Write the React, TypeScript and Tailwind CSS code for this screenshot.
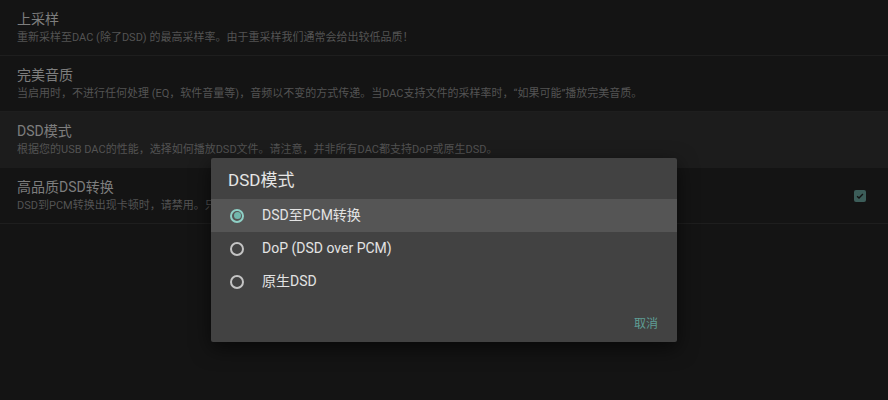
const font = { fontFamily: 'Roboto, "Noto Sans CJK SC", sans-serif' };

type Row = { title: string; sub: string; active?: boolean; check?: boolean };

const rows: Row[] = [
  { title: "上采样", sub: "重新采样至DAC (除了DSD) 的最高采样率。由于重采样我们通常会给出较低品质！" },
  {
    title: "完美音质",
    sub: "当启用时，不进行任何处理 (EQ，软件音量等)，音频以不变的方式传递。当DAC支持文件的采样率时，“如果可能”播放完美音质。",
  },
  {
    title: "DSD模式",
    sub: "根据您的USB DAC的性能，选择如何播放DSD文件。请注意，并非所有DAC都支持DoP或原生DSD。",
    active: true,
  },
  { title: "高品质DSD转换", sub: "DSD到PCM转换出现卡顿时，请禁用。只有在高端设备上才建议使用。", check: true },
];

const options = ["DSD至PCM转换", "DoP (DSD over PCM)", "原生DSD"];

function Radio({ on }: { on: boolean }) {
  return on ? (
    <span className="flex h-[14px] w-[14px] items-center justify-center rounded-full border-2 border-[#8fd0c6]">
      <span className="h-[7px] w-[7px] rounded-full bg-[#72b8ad]" />
    </span>
  ) : (
    <span className="h-[14px] w-[14px] rounded-full border-2 border-[#c4c4c4]" />
  );
}

export default function App() {
  return (
    <div className="relative h-[400px] w-[888px] overflow-hidden bg-[#141414]" style={font}>
      {rows.map((r, i) => (
        <div
          key={i}
          className={`flex h-[56px] items-center border-b px-[17px] ${
            r.active ? "border-transparent bg-[#1c1c1c]" : "border-[#1e1e1e]"
          }`}
        >
          <div className="flex min-w-0 flex-1 flex-col gap-[2px]">
            <div className="text-[14px] leading-[17px] text-[#7e7e7e]">{r.title}</div>
            <div className="truncate text-[11px] leading-[15px] text-[#535353]">{r.sub}</div>
          </div>
          {r.check && (
            <span className="mr-[5px] flex h-[12px] w-[12px] items-center justify-center rounded-[2px] bg-[#3c5d59]">
              <svg viewBox="0 0 12 12" className="h-[10px] w-[10px]">
                <path d="M2.5 6.2l2.3 2.2 4.7-4.8" fill="none" stroke="#121212" strokeWidth="1.6" />
              </svg>
            </span>
          )}
        </div>
      ))}

      <div className="absolute left-[211px] top-[158px] w-[466px] rounded-[2px] bg-[#424242] pb-[8px] shadow-[0_6px_20px_rgba(0,0,0,0.6)]">
        <div className="px-[17px] pb-[10px] pt-[13px] text-[17px] leading-[18px] text-[#e6e6e6]">DSD模式</div>
        {options.map((o, i) => (
          <div
            key={o}
            className={`flex h-[33px] items-center gap-[18px] px-[19px] ${i === 0 ? "bg-[#555555]" : ""}`}
          >
            <Radio on={i === 0} />
            <span className="text-[14px] text-[#e3e3e3]">{o}</span>
          </div>
        ))}
        <div className="flex justify-end px-[19px] pt-[18px] pb-[2px]">
          <span className="text-[12px] leading-[16px] text-[#5f9e95]">取消</span>
        </div>
      </div>
    </div>
  );
}
